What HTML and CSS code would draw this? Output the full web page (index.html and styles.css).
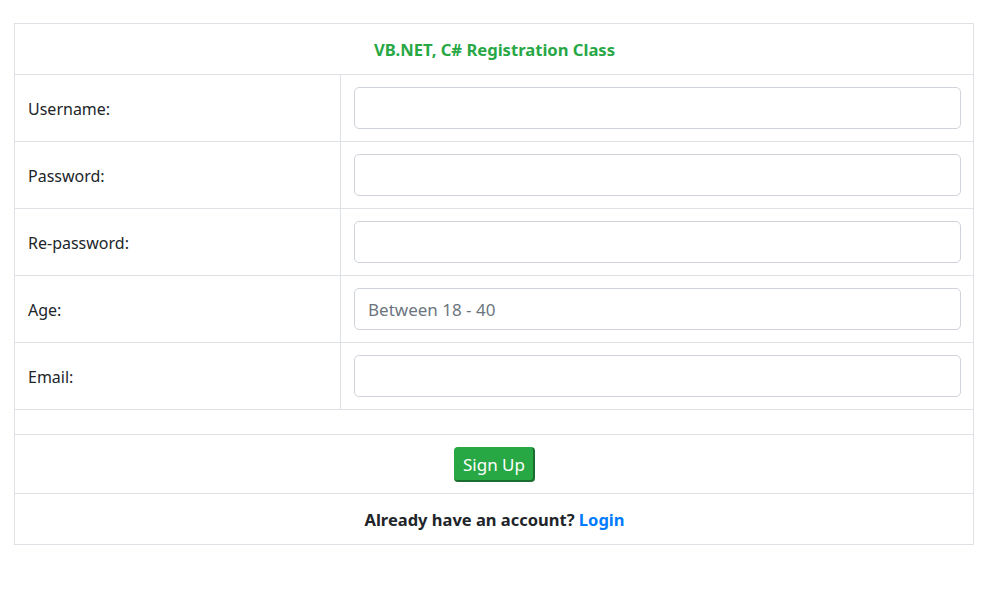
FILE: index.html
```html
<!DOCTYPE html>
<html lang="en">
<head>
<meta charset="utf-8">
<title>Registration</title>
<link rel="stylesheet" href="styles.css">
</head>
<body>
<div class="wrap">
  <table class="reg">
    <tr><th colspan="2" class="title">VB.NET, C# Registration Class</th></tr>
    <tr><td class="lbl">Username:</td><td class="fld"><input class="ctl" type="text"></td></tr>
    <tr><td class="lbl">Password:</td><td class="fld"><input class="ctl" type="password"></td></tr>
    <tr><td class="lbl">Re-password:</td><td class="fld"><input class="ctl" type="password"></td></tr>
    <tr><td class="lbl">Age:</td><td class="fld"><input class="ctl" type="text" placeholder="Between 18 - 40"></td></tr>
    <tr><td class="lbl">Email:</td><td class="fld"><input class="ctl" type="text"></td></tr>
    <tr><td colspan="2" class="empty"></td></tr>
    <tr><td colspan="2" class="center btnrow"><button class="btn" type="button">Sign Up</button></td></tr>
    <tr><td colspan="2" class="center foot">Already have an account? <a href="#" class="link">Login</a></td></tr>
  </table>
</div>
</body>
</html>
```
FILE: styles.css
```css
html, body { margin: 0; padding: 0; background: #fff; }
body { font-family: "Noto Sans", "Open Sans", sans-serif; color: #212529; font-size: 16px; }
.wrap { padding: 23px 33px 0 14px; }
.reg { width: 960px; border-collapse: collapse; }
.reg th, .reg td { border: 1px solid #dee2e6; padding: 0 12px 0 13px; }
.title { height: 50px; color: #28a745; font-weight: 700; font-size: 16.6px; text-align: center; padding-top: 1px; }
.lbl { width: 300px; font-size: 16px; }
.reg td.lbl { padding-top: 2px; height: 64px; }
.fld { height: 66px; }
.ctl { display: block; box-sizing: border-box; width: 100%; height: 42px; border: 1px solid #ced4da; border-radius: 5px; padding: 0 13px; font-family: inherit; font-size: 17px; color: #495057; background: #fff; }
.ctl::placeholder { color: #6c757d; }
.empty { height: 24px; }
.center { text-align: center; }
.btnrow { height: 58px; }
.btn { background: #28a745; color: #fff; border: 1px solid #28a745; border-right: 2px solid #1c6e30; border-bottom: 2px solid #1c6e30; border-radius: 4px; font-family: inherit; font-size: 17px; height: 35px; padding: 1px 8px 0; }
.reg td.foot { height: 49px; font-weight: 700; font-size: 16.5px; padding-top: 1px; }
.link { color: #007bff; text-decoration: none; }
```
